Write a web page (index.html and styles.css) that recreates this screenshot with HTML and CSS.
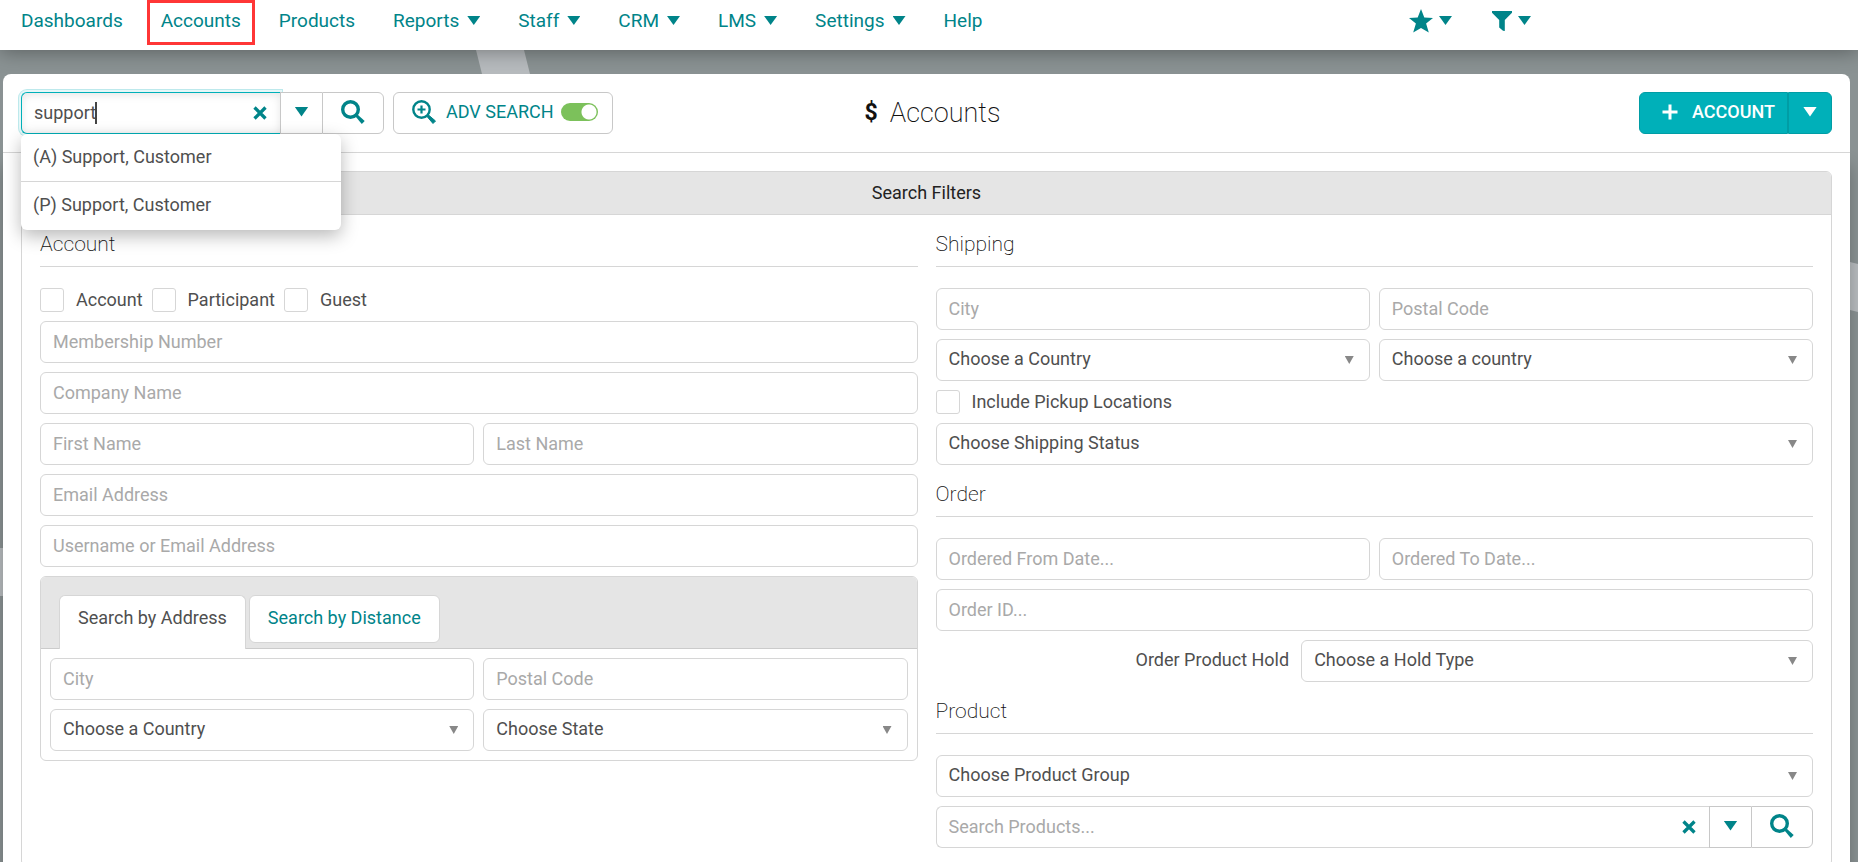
FILE: index.html
```html
<!DOCTYPE html>
<html lang="en">
<head>
  <meta charset="UTF-8">
  <title>Accounts</title>
  <meta name="viewport" content="width=device-width, initial-scale=1">
  <link rel="stylesheet" href="styles.css">
</head>
<body>
  <!-- shared icons -->
  <svg class="icon-defs" width="0" height="0" aria-hidden="true">
    <symbol id="icon-search" viewBox="0 0 24 24">
      <circle cx="9.5" cy="9.5" r="7.8" fill="none" stroke="currentColor" stroke-width="3.4"/>
      <path d="M14.5 16.5l2-2 7.2 6.5-2.9 3z" fill="currentColor"/>
    </symbol>
    <symbol id="icon-zoom" viewBox="0 0 24 24">
      <circle cx="9.5" cy="9.5" r="8.2" fill="none" stroke="currentColor" stroke-width="2.4"/>
      <path d="M9.5 5.5v8M5.5 9.5h8" stroke="currentColor" stroke-width="2.2"/>
      <path d="M15 16.5l1.5-1.5 7 6-2.5 2.5z" fill="currentColor" stroke="currentColor"/>
    </symbol>
    <symbol id="icon-close" viewBox="0 0 14 14">
      <path d="M1.5 1.5l11 11M12.5 1.5l-11 11" stroke="currentColor" stroke-width="3.3"/>
    </symbol>
    <symbol id="icon-plus" viewBox="0 0 16 16">
      <path d="M8 .5v15M.5 8h15" stroke="currentColor" stroke-width="3"/>
    </symbol>
    <symbol id="icon-star" viewBox="0 0 24 24">
      <path d="M12 0l3.3 8.6 8.7.3-6.9 5.6 2.7 9.1L12 18.9l-7.8 4.7 2.7-9.1L0 8.9l8.7-.3z" fill="currentColor"/>
    </symbol>
    <symbol id="icon-filter" viewBox="0 0 20 20">
      <path d="M0 0h20v1.7l-7.2 7.3v11l-1.8-.2-3.8-3.300V9L0 1.7z" fill="currentColor"/>
    </symbol>
  </svg>

  <header class="topbar">
    <nav class="nav">
      <a href="#">Dashboards</a>
      <a href="#" class="marked">Accounts</a>
      <a href="#">Products</a>
      <a href="#">Reports <i class="caret"></i></a>
      <a href="#">Staff <i class="caret"></i></a>
      <a href="#">CRM <i class="caret"></i></a>
      <a href="#">LMS <i class="caret"></i></a>
      <a href="#">Settings <i class="caret"></i></a>
      <a href="#">Help</a>
    </nav>
    <div class="quick">
      <button type="button" aria-label="Favorites"><svg width="24" height="24"><use href="#icon-star"/></svg><i class="caret"></i></button>
      <button type="button" aria-label="Filters"><svg width="20" height="20"><use href="#icon-filter"/></svg><i class="caret"></i></button>
    </div>
  </header>

  <div class="stripe stripe-top"></div>
  <div class="stripe stripe-right"></div>
  <div class="stripe stripe-left"></div>

  <main class="panel">
    <div class="toolbar">
      <div class="tools">
        <div class="search-group main-search">
          <div class="search-field">
            <input type="text" id="search" value="support" aria-label="Search accounts">
            <span class="text-caret"></span>
            <button type="button" class="clear" aria-label="Clear"><svg width="14" height="14"><use href="#icon-close"/></svg></button>
          </div>
          <button type="button" class="addon" aria-label="Search options"><i class="caret"></i></button>
          <button type="button" class="addon addon-search" aria-label="Search"><svg width="24" height="24"><use href="#icon-search"/></svg></button>
          <ul class="suggestions">
            <li><a href="#">(A) Support, Customer</a></li>
            <li><a href="#">(P) Support, Customer</a></li>
          </ul>
        </div>
        <label class="adv-search">
          <svg width="24" height="24"><use href="#icon-zoom"/></svg>
          <span>ADV SEARCH</span>
          <input type="checkbox" class="switch" checked>
        </label>
      </div>
      <h1><b>$</b>Accounts</h1>
      <div class="actions">
        <button type="button" class="add-account"><svg width="16" height="16"><use href="#icon-plus"/></svg>ACCOUNT</button>
        <button type="button" class="add-more" aria-label="More"><i class="caret"></i></button>
      </div>
    </div>

    <form class="card">
      <h2 class="card-title">Search Filters</h2>
      <div class="card-body">
        <section class="column">
          <h3>Account</h3>
          <div class="checks">
            <label><input type="checkbox">Account</label>
            <label><input type="checkbox">Participant</label>
            <label><input type="checkbox">Guest</label>
          </div>
          <input class="field" type="text" placeholder="Membership Number" aria-label="Membership Number">
          <input class="field" type="text" placeholder="Company Name" aria-label="Company Name">
          <div class="pair">
            <input class="field" type="text" placeholder="First Name" aria-label="First Name">
            <input class="field" type="text" placeholder="Last Name" aria-label="Last Name">
          </div>
          <input class="field" type="text" placeholder="Email Address" aria-label="Email Address">
          <input class="field" type="text" placeholder="Username or Email Address" aria-label="Username or Email Address">
          <div class="tab-box">
            <div class="tabs">
              <button type="button" class="tab active">Search by Address</button>
              <button type="button" class="tab">Search by Distance</button>
            </div>
            <div class="tab-body">
              <div class="pair">
                <input class="field" type="text" placeholder="City" aria-label="City">
                <input class="field" type="text" placeholder="Postal Code" aria-label="Postal Code">
              </div>
              <div class="pair">
                <div class="select"><select class="field" aria-label="Country"><option>Choose a Country</option></select></div>
                <div class="select"><select class="field" aria-label="State"><option>Choose State</option></select></div>
              </div>
            </div>
          </div>
        </section>

        <section class="column">
          <h3>Shipping</h3>
          <div class="pair">
            <input class="field" type="text" placeholder="City" aria-label="Shipping city">
            <input class="field" type="text" placeholder="Postal Code" aria-label="Shipping postal code">
          </div>
          <div class="pair">
            <div class="select"><select class="field" aria-label="Shipping country"><option>Choose a Country</option></select></div>
            <div class="select"><select class="field" aria-label="Shipping state"><option>Choose a country</option></select></div>
          </div>
          <div class="checks">
            <label><input type="checkbox">Include Pickup Locations</label>
          </div>
          <div class="select"><select class="field" aria-label="Shipping status"><option>Choose Shipping Status</option></select></div>

          <h3>Order</h3>
          <div class="pair">
            <input class="field" type="text" placeholder="Ordered From Date..." aria-label="Ordered from date">
            <input class="field" type="text" placeholder="Ordered To Date..." aria-label="Ordered to date">
          </div>
          <input class="field" type="text" placeholder="Order ID..." aria-label="Order ID">
          <div class="hold-row">
            <label for="hold">Order Product Hold</label>
            <div class="select"><select class="field" id="hold"><option>Choose a Hold Type</option></select></div>
          </div>

          <h3>Product</h3>
          <div class="select"><select class="field" aria-label="Product group"><option>Choose Product Group</option></select></div>
          <div class="search-group">
            <div class="search-field">
              <input type="text" placeholder="Search Products..." aria-label="Search products">
              <button type="button" class="clear" aria-label="Clear"><svg width="14" height="14"><use href="#icon-close"/></svg></button>
            </div>
            <button type="button" class="addon" aria-label="Search options"><i class="caret"></i></button>
            <button type="button" class="addon addon-search" aria-label="Search"><svg width="24" height="24"><use href="#icon-search"/></svg></button>
          </div>
        </section>
      </div>
    </form>
  </main>
</body>
</html>
```
FILE: styles.css
```css
:root {
  --teal: #008489;
  --bright: #00b0b9;
  --line: #d6d6d6;
  --text: #4f4f4f;
  --radius: 6px;
}

* {
  box-sizing: border-box;
}

html {
  scrollbar-width: none;
}

body {
  margin: 0;
  font-family: Roboto, "Liberation Sans", sans-serif;
  font-size: 18px;
  line-height: 24px;
  color: var(--text);
  background: #8a9293;
  min-height: 100vh;
  position: relative;
  overflow-x: hidden;
}

a {
  color: inherit;
  text-decoration: none;
}

button,
input,
select {
  font: inherit;
  color: inherit;
}

button {
  margin: 0;
  padding: 0;
  border: 0;
  background: none;
  cursor: pointer;
}

svg {
  display: block;
}

.icon-defs {
  position: absolute;
}

.caret {
  display: inline-block;
  width: 14px;
  height: 10px;
  background: currentColor;
  clip-path: polygon(0 0, 100% 0, 50% 100%);
}

/* top navigation */
.topbar {
  position: relative;
  z-index: 2;
  display: flex;
  justify-content: space-between;
  height: 50px;
  padding: 8px 327px 0 21px;
  background: #fff;
  color: var(--teal);
  box-shadow: 0 2px 20px rgba(0, 0, 0, 0.35);
}

.nav {
  display: flex;
  gap: 38px;
  font-size: 19px;
}

.nav a {
  display: flex;
  align-items: center;
  gap: 8px;
  height: 25px;
}

.nav .caret,
.quick .caret {
  width: 13px;
  height: 9px;
}

.marked {
  position: relative;
}

.marked::after {
  content: "";
  position: absolute;
  inset: -8px -14px -12px;
  border: 3px solid #ff3636;
}

.quick {
  display: flex;
  gap: 40px;
  height: 25px;
}

.quick button {
  display: flex;
  align-items: center;
  gap: 6px;
  color: var(--teal);
}

/* backdrop stripes */
.stripe {
  position: absolute;
  background: #b7bbbe;
}

.stripe-top {
  top: 50px;
  left: 476px;
  width: 54px;
  height: 24px;
  clip-path: polygon(0 0, 48px 0, 100% 100%, 6px 100%);
}

.stripe-right {
  top: 262px;
  right: 0;
  width: 8px;
  height: 50px;
  clip-path: polygon(0 0, 100% 2px, 100% 100%, 0 48px);
}

.stripe-left {
  top: 548px;
  left: 0;
  width: 3px;
  height: 48px;
}

/* main panel */
.panel {
  position: relative;
  margin: 24px 8px 0 3px;
  padding-bottom: 18px;
  background: #fff;
  border-radius: 8px 8px 0 0;
  box-shadow: 0 90px 16px rgba(0, 0, 0, 0.25);
}

.toolbar {
  display: grid;
  grid-template-columns: 1fr auto 1fr;
  align-items: center;
  height: 79px;
  padding: 0 18px;
  border-bottom: 1px solid var(--line);
}

.tools {
  display: flex;
  gap: 9px;
}

.search-group {
  position: relative;
  display: flex;
  height: 42px;
}

.search-field {
  flex: 1;
  position: relative;
}

.search-field input {
  width: 100%;
  height: 42px;
  padding: 0 42px 2px 12px;
  border: 1px solid var(--line);
  border-right: 0;
  border-radius: var(--radius) 0 0 var(--radius);
  background: #fff;
  outline: none;
}

.clear {
  position: absolute;
  top: 14px;
  right: 13px;
  color: var(--teal);
}

.addon {
  position: relative;
  display: flex;
  align-items: center;
  justify-content: center;
  width: 42px;
  border: 1px solid #c8c8c8;
  border-right: 0;
  background: #fff;
  color: var(--teal);
}

.addon .caret,
.addon svg {
  margin-bottom: 3px;
}

.addon-search {
  width: 62px;
  border-right: 1px solid #c8c8c8;
  border-radius: 0 var(--radius) var(--radius) 0;
}

.main-search {
  width: 363px;
}

.main-search .search-field input {
  border-color: var(--bright);
  box-shadow: 0 0 0 2px #e6f7f8, 0 0 0 3px #bde9ec, inset 0 2px 8px rgba(0, 0, 0, 0.1);
}

.text-caret {
  position: absolute;
  top: 10px;
  left: 74px;
  width: 2px;
  height: 22px;
  background: #444;
}

.suggestions {
  position: absolute;
  top: 42px;
  left: 0;
  z-index: 3;
  width: 320px;
  margin: 0;
  padding: 0 0 1px;
  list-style: none;
  background: #fff;
  border-radius: var(--radius);
  box-shadow: 0 6px 18px rgba(0, 0, 0, 0.28);
}

.suggestions a {
  display: block;
  padding: 11px 12px 12px;
}

.suggestions li + li {
  border-top: 1px solid var(--line);
}

.adv-search {
  display: flex;
  align-items: center;
  height: 42px;
  padding: 0 14px 3px 18px;
  border: 1px solid #c8c8c8;
  border-radius: var(--radius);
  color: var(--teal);
  cursor: pointer;
}

.adv-search span {
  margin: 0 7px 0 10px;
}

.switch {
  appearance: none;
  width: 37px;
  height: 18px;
  margin: 0;
  border-radius: 9px;
  background: radial-gradient(circle at 28px 9px, #fff 7px, transparent 8px) #7cc15b;
}

h1 {
  display: flex;
  align-items: center;
  gap: 12px;
  margin: 0;
  padding-left: 12px;
  font-size: 27px;
  font-weight: 200;
  line-height: 32px;
  color: #111;
}

h1 b {
  font-size: 23px;
  font-weight: 700;
}

.actions {
  display: flex;
  justify-content: flex-end;
  height: 42px;
  color: #fff;
}

.add-account,
.add-more {
  display: flex;
  align-items: center;
  justify-content: center;
  padding-bottom: 3px;
  border: 1px solid #009da5;
  background: var(--bright);
}

.add-account {
  gap: 14px;
  padding-left: 22px;
  padding-right: 12px;
  font-weight: 500;
  border-radius: var(--radius) 0 0 var(--radius);
}

.add-more {
  width: 44px;
  border-radius: 0 var(--radius) var(--radius) 0;
}

/* filters */
.card {
  margin: 18px 18px 0;
  border: 1px solid var(--line);
  border-radius: var(--radius);
}

.card-title {
  margin: 0;
  padding: 9px 0;
  font-size: 18px;
  font-weight: 400;
  text-align: center;
  color: #222;
  background: #e5e5e5;
  border-bottom: 1px solid var(--line);
  border-radius: 5px 5px 0 0;
}

.card-body {
  display: grid;
  grid-template-columns: 1fr 1fr;
  align-items: start;
  gap: 18px;
  padding: 9px 18px 18px;
}

.column,
.tab-body {
  display: grid;
  gap: 9px;
}

h3 {
  margin: 0 0 12px;
  padding: 8px 0 10px;
  font-size: 21px;
  font-weight: 200;
  line-height: 24px;
  color: #111;
  border-bottom: 1px solid var(--line);
}

.field {
  display: block;
  width: 100%;
  height: 42px;
  padding: 0 12px 2px;
  border: 1px solid var(--line);
  border-radius: var(--radius);
  background: #fff;
}

::placeholder {
  color: #a9a9a9;
  opacity: 1;
}

.pair {
  display: grid;
  grid-template-columns: 1fr 1fr;
  gap: 9px;
}

.select {
  position: relative;
}

.select select {
  appearance: none;
  padding-bottom: 3px;
}

.select::after {
  content: "";
  position: absolute;
  top: 17px;
  right: 16px;
  width: 9px;
  height: 8px;
  background: #888;
  clip-path: polygon(0 0, 100% 0, 50% 100%);
  pointer-events: none;
}

.checks {
  display: flex;
  gap: 9px;
}

.checks label {
  display: flex;
  gap: 12px;
}

.checks input {
  appearance: none;
  width: 24px;
  height: 24px;
  margin: 0;
  border: 1px solid var(--line);
  border-radius: 3px;
  background: #fff;
}

.hold-row {
  display: flex;
  align-items: center;
  justify-content: flex-end;
  gap: 12px;
}

.hold-row label {
  padding-bottom: 3px;
}

.hold-row .select {
  width: 58.333%;
}

.tab-box {
  border: 1px solid var(--line);
  border-radius: var(--radius);
}

.tabs {
  display: flex;
  align-items: flex-start;
  gap: 3px;
  height: 72px;
  padding: 18px 18px 0;
  background: #e5e5e5;
  border-bottom: 1px solid #cbcbcb;
  border-radius: 5px 5px 0 0;
}

.tab {
  height: 48px;
  padding: 0 18px 3px;
  border: 1px solid var(--line);
  border-radius: var(--radius);
  background: #fff;
  color: var(--teal);
}

.tab.active {
  height: 54px;
  padding-bottom: 10px;
  border-bottom: 0;
  border-radius: var(--radius) var(--radius) 0 0;
  color: var(--text);
}

.tab-body {
  padding: 9px;
}
```
